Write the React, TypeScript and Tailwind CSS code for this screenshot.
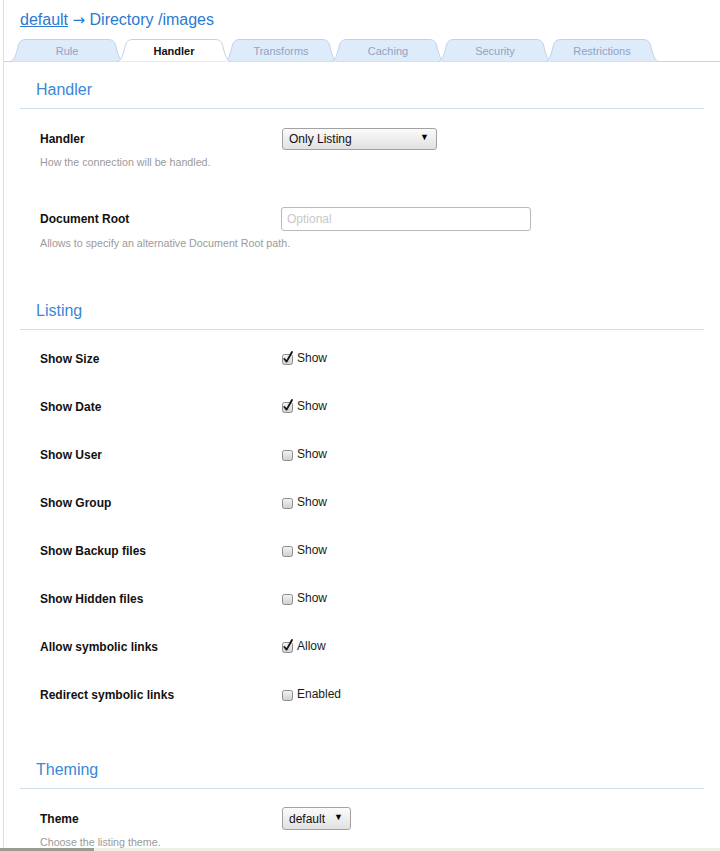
import React from "react";

const tabs = ["Rule", "Handler", "Transforms", "Caching", "Security", "Restrictions"];

const listing = [
  { label: "Show Size", checked: true, text: "Show" },
  { label: "Show Date", checked: true, text: "Show" },
  { label: "Show User", checked: false, text: "Show" },
  { label: "Show Group", checked: false, text: "Show" },
  { label: "Show Backup files", checked: false, text: "Show" },
  { label: "Show Hidden files", checked: false, text: "Show" },
  { label: "Allow symbolic links", checked: true, text: "Allow" },
  { label: "Redirect symbolic links", checked: false, text: "Enabled" },
];

const Tab = ({ name, active }: { name: string; active: boolean }) => (
  <div className={`relative w-[114px] h-[22px] -ml-[7px] first:ml-0 ${active ? "z-10" : ""}`}>
    <svg className="absolute inset-0" width="114" height="23" viewBox="0 0 114 23">
      <path
        d="M0,22.5 C4,22.5 6,16 8,8 C9,3 11,0.5 16,0.5 L98,0.5 C103,0.5 105,3 106,8 C108,16 110,22.5 114,22.5"
        fill={active ? "#ffffff" : "#deebfb"}
        stroke="#bfd2e8"
        strokeWidth="1"
      />
    </svg>
    <div
      className={`relative flex h-full items-center justify-center pt-[3px] text-[11px] ${
        active ? "font-bold text-[#111]" : "text-[#90a3c1]"
      }`}
    >
      {name}
    </div>
  </div>
);

const SectionTitle = ({ title }: { title: string }) => (
  <div className="border-b border-[#d3dfec] pb-[8px] pl-[16px] text-[16px] leading-[20px] text-[#3a87d7]">
    {title}
  </div>
);

const Label = ({ children }: { children: React.ReactNode }) => (
  <div className="w-[242px] shrink-0 text-[12px] font-bold text-[#111]">{children}</div>
);

const Desc = ({ children }: { children: React.ReactNode }) => (
  <div className="text-[10.7px] leading-[12px] text-[#9a9a9a]">{children}</div>
);

const Select = ({ value, width }: { value: string; width: string }) => (
  <div
    className={`flex ${width} items-center justify-between rounded-[3px] border border-[#a2a2a2] bg-gradient-to-b from-[#fbfbfb] to-[#e1e1e1] pl-[6px] pr-[7px] text-[12px] text-[#111]`}
  >
    <span>{value}</span>
    <span className="-mt-[2px] text-[9px] text-black">▼</span>
  </div>
);

const Checkbox = ({ checked }: { checked: boolean }) => (
  <svg width="12" height="14" viewBox="0 0 12 14" className="-mt-[3px]">
    <defs>
      <linearGradient id="cbg" x1="0" y1="0" x2="0" y2="1">
        <stop offset="0" stopColor="#f4f4f4" />
        <stop offset="1" stopColor="#cfcfcf" />
      </linearGradient>
    </defs>
    <rect x="0.5" y="3.5" width="10" height="10" rx="2" fill="url(#cbg)" stroke="#8c8c8c" />
    {checked && (
      <path d="M2.4,8 L4.6,10.6 L10,1" fill="none" stroke="#111" strokeWidth="1.8" strokeLinecap="round" strokeLinejoin="round" />
    )}
  </svg>
);

export default function App() {
  return (
    <div
      className="relative h-[851px] w-[720px] overflow-hidden bg-white pl-[3px]"
      style={{ fontFamily: '"Liberation Sans", Arial, sans-serif' }}
    >
      <div className="h-full border-l border-[#d2e0f1]">
        {/* Title */}
        <div className="pl-[16px] pt-[10px] text-[16px] leading-[20px] text-[#2a7ad2]">
          <span className="underline">default</span>{" "}
          <span style={{ fontFamily: '"DejaVu Sans", sans-serif' }} className="text-[15px]">→</span> Directory /images
        </div>

        {/* Tabs */}
        <div className="mt-[9px] flex h-[23px] border-b border-[#c6d6e8] pl-[6px]">
          {tabs.map((t) => (
            <Tab key={t} name={t} active={t === "Handler"} />
          ))}
        </div>

        <div className="mx-[16px]">
          {/* Handler */}
          <div className="mt-[18px]">
            <SectionTitle title="Handler" />
          </div>
          <div className="pl-[20px]">
            <div className="mt-[19px] flex h-[22px] items-center">
              <Label>Handler</Label>
              <Select value="Only Listing" width="w-[155px] h-[22px]" />
            </div>
            <div className="mt-[6px]">
              <Desc>How the connection will be handled.</Desc>
            </div>

            <div className="mt-[39px] flex h-[24px] items-center">
              <Label>Document Root</Label>
              <div className="flex h-[24px] w-[250px] items-center rounded-[3px] border border-[#b9b9b9] pl-[5px] text-[12px] text-[#c8c8c8] -ml-px">
                Optional
              </div>
            </div>
            <div className="mt-[6px]">
              <Desc>Allows to specify an alternative Document Root path.</Desc>
            </div>
          </div>

          {/* Listing */}
          <div className="mt-[52px]">
            <SectionTitle title="Listing" />
          </div>
          <div className="pl-[20px] pt-[19px]">
            {listing.map((r, i) => (
              <div key={r.label} className={`flex h-[20px] items-center ${i > 0 ? "mt-[28px]" : ""}`}>
                <Label>{r.label}</Label>
                <div className="flex items-center gap-[3px] text-[12px] text-[#1a1a1a]">
                  <Checkbox checked={r.checked} />
                  <span className="-mt-[2px]">{r.text}</span>
                </div>
              </div>
            ))}
          </div>

          {/* Theming */}
          <div className="mt-[55px]">
            <SectionTitle title="Theming" />
          </div>
          <div className="pl-[20px]">
            <div className="mt-[18px] flex h-[23px] items-center">
              <Label>Theme</Label>
              <Select value="default" width="w-[69px] h-[23px]" />
            </div>
            <div className="mt-[6px]">
              <Desc>Choose the listing theme.</Desc>
            </div>
          </div>
        </div>
      </div>

      {/* bottom scrollbar strip */}
      <div className="absolute bottom-0 left-0 flex h-[3px] w-full">
        <div className="h-full w-[94px] bg-[#9d998d]" />
        <div className="h-full flex-1 bg-[#f4efe4]" />
      </div>
    </div>
  );
}
